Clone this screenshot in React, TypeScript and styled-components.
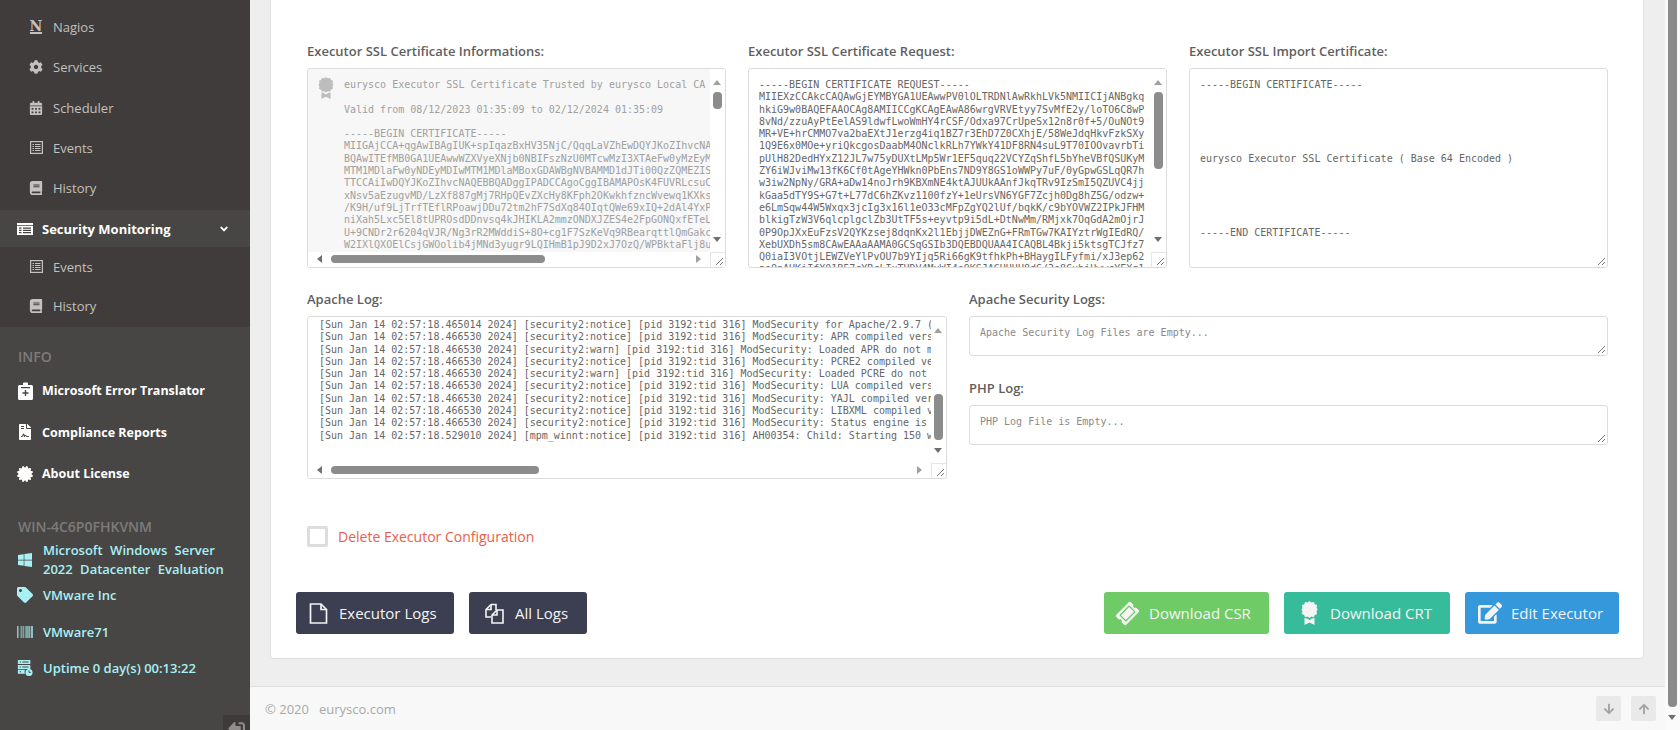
import React from "react";
import styled, { createGlobalStyle } from "styled-components";
import {
  FaAngleDown,
  FaArrowDown,
  FaArrowUp,
  FaBarcode,
  FaBook,
  FaCalendarAlt,
  FaCertificate,
  FaCog,
  FaEdit,
  FaFileContract,
  FaSignOutAlt,
  FaTag,
  FaTicketAlt,
  FaWindows,
} from "react-icons/fa";

const GlobalStyle = createGlobalStyle`
  html, body {
    margin: 0;
    height: 730px;
    overflow: hidden;
    font-family: "Open Sans", "Noto Sans", sans-serif;
    background: #eeeeee;
  }
  * { box-sizing: border-box; }
`;

const Page = styled.div`
  display: flex;
  width: 1680px;
  height: 730px;
  overflow: hidden;
`;

const Sidebar = styled.aside`
  position: relative;
  flex: 0 0 250px;
  background: #484644;
  display: flex;
  flex-direction: column;
`;

const SubMenu = styled.div<{ $height: number; $pad: number }>`
  background: #403c3b;
  height: ${(p) => p.$height}px;
  display: flex;
  flex-direction: column;
  justify-content: flex-end;
  padding-bottom: ${(p) => p.$pad}px;
`;

const SubItem = styled.div`
  height: 40.2px;
  display: flex;
  align-items: center;
  padding-left: 29px;
  gap: 10px;
  color: #c2c0bf;
  font-size: 13px;
`;

const SubIcon = styled.span`
  width: 14px;
  display: flex;
  justify-content: center;
  font-size: 14px;
  color: #c4c2c1;
`;

const NagiosMark = styled.span`
  font-family: "DejaVu Serif", "Liberation Serif", serif;
  font-weight: 700;
  font-size: 14px;
  line-height: 12px;
  border-bottom: 2px solid #c4c2c1;
`;

const ActiveItem = styled.div`
  height: 37px;
  display: flex;
  align-items: center;
  padding: 0 20px 0 17px;
  color: #fff;
  font-size: 13px;
  font-weight: 700;
  gap: 9px;
`;

const Caret = styled.span`
  margin-left: auto;
  display: flex;
  font-size: 12px;
`;

const SectionTitle = styled.div<{ $top: number }>`
  margin-top: ${(p) => p.$top}px;
  padding-left: 18px;
  color: #7d7b7a;
  font-size: 14px;
  font-weight: 600;
  line-height: 20px;
`;

const InfoList = styled.div`
  margin-top: 3px;
  display: flex;
  flex-direction: column;
`;

const InfoItem = styled.div<{ $height: number }>`
  height: ${(p) => p.$height}px;
  display: flex;
  align-items: center;
  padding-left: 17px;
  gap: 9px;
  color: #fff;
  font-size: 12.5px;
  font-weight: 700;
`;

const InfoIcon = styled.span`
  width: 16px;
  display: flex;
  justify-content: center;
  font-size: 16px;
`;

const HostList = styled.div`
  margin-top: 2px;
  color: #a9f0f5;
  font-size: 13px;
  font-weight: 600;
  display: flex;
  flex-direction: column;
`;

const HostItem = styled.div<{ $height: number; $top?: number }>`
  height: ${(p) => p.$height}px;
  margin-top: ${(p) => p.$top ?? 0}px;
  display: flex;
  align-items: center;
  padding-left: 17px;
  gap: 10px;
`;

const HostName = styled.div`
  width: 182px;
  line-height: 19px;
  word-spacing: 4px;
`;

const Collapse = styled.div`
  position: absolute;
  right: 0;
  bottom: 0;
  width: 27px;
  height: 15px;
  background: #3d3a39;
  overflow: hidden;
  display: flex;
  justify-content: center;
  padding-top: 5px;
  color: #8f8d8c;
  font-size: 17px;
  svg { transform: scaleX(-1); flex: none; }
`;

const Main = styled.main`
  flex: 1;
  display: flex;
  flex-direction: column;
  min-width: 0;
`;

const Content = styled.div`
  flex: 1;
  padding: 0 21px 0 20px;
  background: #eeeeee;
`;

const Panel = styled.section`
  height: 659px;
  background: #fff;
  border: 1px solid #e0e0e0;
  border-top: 0;
  border-radius: 0 0 3px 3px;
  padding: 41px 36px 0 36px;
`;

const CertRow = styled.div`
  display: grid;
  grid-template-columns: repeat(3, 419px);
  column-gap: 22px;
`;

const Label = styled.label`
  display: block;
  color: #5f5f5f;
  font-size: 13px;
  font-weight: 600;
  line-height: 20px;
  margin-bottom: 7px;
`;

const TextBox = styled.div<{ $height: number; $readOnly?: boolean }>`
  position: relative;
  height: ${(p) => p.$height}px;
  border: 1px solid #dcdcdc;
  border-radius: 3px;
  background: ${(p) => (p.$readOnly ? "#f7f7f7" : "#fff")};
  overflow: hidden;
`;

const Mono = styled.pre<{ $left?: number; $top?: number; $tone?: string; $scroll?: boolean; $hscroll?: boolean }>`
  margin: 0;
  width: ${(p) => (p.$scroll ? "calc(100% - 15px)" : "100%")};
  height: ${(p) => (p.$hscroll ? "calc(100% - 15px)" : "100%")};
  padding: ${(p) => p.$top ?? 10}px 0 0 ${(p) => p.$left ?? 10}px;
  font-family: "DejaVu Sans Mono", "Liberation Mono", monospace;
  font-size: 10px;
  line-height: 12.3px;
  color: ${(p) => p.$tone ?? "#666"};
  overflow: hidden;
  white-space: pre;
`;

const CertIcon = styled.span`
  position: absolute;
  left: 10px;
  top: 8px;
  color: #bdbdbd;
  display: flex;
`;

const VTrack = styled.div`
  position: absolute;
  top: 0;
  right: 0;
  bottom: 15px;
  width: 15px;
  background: #fff;
`;

const HTrack = styled.div`
  position: absolute;
  left: 0;
  right: 15px;
  bottom: 0;
  height: 15px;
  background: #fff;
`;

const Thumb = styled.div`
  position: absolute;
  background: #8c8c8c;
  border-radius: 4px;
`;

const Arrow = styled.div<{ $dir: "up" | "down" | "left" | "right" }>`
  position: absolute;
  width: 0;
  height: 0;
  border-style: solid;
  border-color: transparent;
  ${(p) =>
    p.$dir === "up"
      ? "border-width: 0 4.5px 5px; border-bottom-color: #a0a0a0;"
      : p.$dir === "down"
      ? "border-width: 5px 4.5px 0; border-top-color: #707070;"
      : p.$dir === "left"
      ? "border-width: 4.5px 5px 4.5px 0; border-right-color: #707070;"
      : "border-width: 4.5px 0 4.5px 5px; border-left-color: #a0a0a0;"}
`;

const Corner = styled.div<{ $boxed?: boolean }>`
  position: absolute;
  right: 0;
  bottom: 0;
  width: 15px;
  height: 15px;
  ${(p) => (p.$boxed ? "background: #fff; border-left: 1px solid #e6e6e6; border-top: 1px solid #e6e6e6;" : "")}
  svg { position: absolute; right: 1px; bottom: 1px; display: block; }
`;

const LogRow = styled.div`
  display: grid;
  grid-template-columns: 640px 639px;
  column-gap: 22px;
  margin-top: 21px;
`;

const LogColumn = styled.div`
  display: flex;
  flex-direction: column;
`;

const LogLabel = styled(Label)<{ $top?: number }>`
  margin-top: ${(p) => p.$top ?? 0}px;
`;

const DeleteRow = styled.div`
  display: flex;
  align-items: center;
  gap: 10px;
  margin-top: 47px;
  color: #e85e4c;
  font-size: 14px;
`;

const CheckBox = styled.span`
  width: 21px;
  height: 21px;
  border: 3px solid #dddddd;
  border-radius: 2px;
`;

const ButtonRow = styled.div`
  display: flex;
  align-items: center;
  margin: 45px -12px 0 -11px;
  gap: 15px;
`;

const Button = styled.button<{ $bg: string; $width: number; $pad: number; $gap: number; $icon?: number }>`
  display: flex;
  align-items: center;
  gap: ${(p) => p.$gap}px;
  width: ${(p) => p.$width}px;
  height: 42px;
  padding: 0 0 0 ${(p) => p.$pad}px;
  background: ${(p) => p.$bg};
  color: #f4f4f4;
  border: 0;
  border-radius: 3px;
  font-family: inherit;
  font-size: 15px;
  svg { flex: none; font-size: ${(p) => p.$icon ?? 21}px; }
`;

const Spacer = styled.div`
  flex: 1;
`;

const Footer = styled.footer`
  height: 44px;
  background: #f8f8f8;
  border-top: 1px solid #dfdfdf;
  display: flex;
  align-items: center;
  padding: 0 9px 0 15px;
  color: #a9a9a9;
  font-size: 13px;
`;

const FooterLink = styled.span`
  margin-left: 10px;
`;

const FooterButton = styled.span`
  width: 25px;
  height: 25px;
  margin-left: 10px;
  background: #e9e9e9;
  border-radius: 2px;
  color: #a3a3a3;
  font-size: 12px;
  display: flex;
  align-items: center;
  justify-content: center;
`;

const PageBar = styled.div`
  position: relative;
  flex: 0 0 15px;
  background: #fafafa;
`;

const PageThumb = styled.div`
  height: 707px;
  width: 9px;
  margin-left: 3px;
  background: #8a8a8a;
  border-radius: 0 0 4px 4px;
`;

const certInfo = `eurysco Executor SSL Certificate Trusted by eurysco Local CA

Valid from 08/12/2023 01:35:09 to 02/12/2024 01:35:09

-----BEGIN CERTIFICATE-----
MIIGAjCCA+qgAwIBAgIUK+spIqazBxHV35NjC/QqqLaVZhEwDQYJKoZIhvcNA
BQAwITEfMB0GA1UEAwwWZXVyeXNjb0NBIFszNzU0MTcwMzI3XTAeFw0yMzEyM
MTM1MDlaFw0yNDEyMDIwMTM1MDlaMBoxGDAWBgNVBAMMD1dJTi00QzZQMEZIS
TTCCAiIwDQYJKoZIhvcNAQEBBQADggIPADCCAgoCggIBAMAPOsK4FUVRLcsuC
xNsv5aEzugvMD/LzXf887gMj7RHpQEvZXcHy8KFph2OKwkhfzncWvewq1KXks
/K9H/uf9LjTrfTEflRPoawjDDu72tm2hF7SdXq84OIqtQWe69xIQ+2dAl4YxP
niXah5Lxc5El8tUPROsdDDnvsq4kJHIKLA2mmzONDXJZES4e2FpGONQxfETeL
U+9CNDr2r6204qVJR/Ng3rR2MWddiS+8O+cg1F7SzKeVq9RBearqttlQmGakc
W2IXlQXOElCsjGWOolib4jMNd3yugr9LQIHmB1pJ9D2xJ7OzQ/WPBktaFlj8u`;

const certRequest = `-----BEGIN CERTIFICATE REQUEST-----
MIIEXzCCAkcCAQAwGjEYMBYGA1UEAwwPV0lOLTRDNlAwRkhLVk5NMIICIjANBgkq
hkiG9w0BAQEFAAOCAg8AMIICCgKCAgEAwA86wrgVRVEtyy7SvMfE2y/loTO6C8wP
8vNd/zzuAyPtEelAS9ldwfLwoWmHY4rCSF/Odxa97CrUpeSx12n8r0f+5/OuNOt9
MR+VE+hrCMMO7va2baEXtJ1erzg4iq1BZ7r3EhD7Z0CXhjE/58WeJdqHkvFzkSXy
1Q9E6x0MOe+yriQkcgosDaabM4ONclkRLh7YWkY41DF8RN4suL9T70IOOvavrbTi
pUlH82DedHYxZ12JL7w75yDUXtLMp5Wr1EF5quq22VCYZqShfL5bYheVBfQSUKyM
ZY6iWJviMw13fK6Cf0tAgeYHWkn0PbEns7ND9Y8GS1oWWPy7uF/0yGpwGSLqQR7h
w3iw2NpNy/GRA+aDw14noJrh9KBXmNE4ktAJUUkAAnfJkqTRv9IzSmI5QZUVC4jj
kGaa5dTY9S+G7t+L77dC6hZKvz1100fzY+1eUrsVN6YGF7Zcjh0Dg8hZ5G/odzw+
e6LmSqw44W5Wxqx3jcIg3x16l1eO33cMFpZgYQ2lUf/bqkK/c9bYOVWZ2IPkJFHM
blkigTzW3V6qlcplgclZb3UtTF5s+eyvtp9i5dL+DtNwMm/RMjxk7OqGdA2mOjrJ
0P9OpJXxEuFzsV2QYKzsej8dqnKx2l1EbjjDWEZnG+FRmTGw7KAIYztrWgIEdRQ/
XebUXDh5sm8CAwEAAaAAMA0GCSqGSIb3DQEBDQUAA4ICAQBL4Bkji5ktsgTCJfz7
Q0iaI3VOtjLEWZVeYlPvOU7b9YIjq5Ri66gK9tfhkPh+BHaygILFyfmi/xJ3ep62
aoQaAHKiIfX01B57cYRcLIuTUDV4MuWI4o9KSJAGHUUH8dS/3e8CubjUwwcYEXq1`;

const certImport = `-----BEGIN CERTIFICATE-----





eurysco Executor SSL Certificate ( Base 64 Encoded )





-----END CERTIFICATE-----`;

const apacheLog = `[Sun Jan 14 02:57:18.465014 2024] [security2:notice] [pid 3192:tid 316] ModSecurity for Apache/2.9.7 (
[Sun Jan 14 02:57:18.466530 2024] [security2:notice] [pid 3192:tid 316] ModSecurity: APR compiled vers
[Sun Jan 14 02:57:18.466530 2024] [security2:warn] [pid 3192:tid 316] ModSecurity: Loaded APR do not m
[Sun Jan 14 02:57:18.466530 2024] [security2:notice] [pid 3192:tid 316] ModSecurity: PCRE2 compiled ve
[Sun Jan 14 02:57:18.466530 2024] [security2:warn] [pid 3192:tid 316] ModSecurity: Loaded PCRE do not 
[Sun Jan 14 02:57:18.466530 2024] [security2:notice] [pid 3192:tid 316] ModSecurity: LUA compiled vers
[Sun Jan 14 02:57:18.466530 2024] [security2:notice] [pid 3192:tid 316] ModSecurity: YAJL compiled ver
[Sun Jan 14 02:57:18.466530 2024] [security2:notice] [pid 3192:tid 316] ModSecurity: LIBXML compiled v
[Sun Jan 14 02:57:18.466530 2024] [security2:notice] [pid 3192:tid 316] ModSecurity: Status engine is 
[Sun Jan 14 02:57:18.529010 2024] [mpm_winnt:notice] [pid 3192:tid 316] AH00354: Child: Starting 150 w`;

const Grip = () => (
  <svg width="10" height="10" viewBox="0 0 10 10">
    <path d="M9 2 2 9M9 6 6 9" stroke="#777" strokeWidth="1" fill="none" />
  </svg>
);

const ListPageIcon = () => (
  <svg width="13" height="13" viewBox="0 0 13 13" fill="none" stroke="currentColor">
    <rect x="0.6" y="0.6" width="11.8" height="11.8" strokeWidth="1.2" />
    <path d="M2.500 3.500h1.500M5 3.500h5.500M2.500 5.500h1.500M5 5.500h5.500M2.500 7.500h1.500M5 7.500h5.500M2.500 9.500h1.500M5 9.500h5.500" strokeWidth="1" />
  </svg>
);

const WindowListIcon = () => (
  <svg width="16" height="12" viewBox="0 0 16 12">
    <path fill="#fff" d="M0 0h16v12H0z" />
    <path fill="#484644" d="M6 4.500h8v1.300H6zM6 6.800h8v1.300H6zM6 9h8v1.300H6zM2 4.500h2.500v1.300H2zM2 6.800h2.500v1.300H2zM2 9h2.500v1.300H2zM0 2h16v.8H0z" />
  </svg>
);

const ClipboardPlusIcon = () => (
  <svg width="15" height="18" viewBox="0 0 15 18">
    <path fill="#fff" d="M1.500 3H5V1.500A1 1 0 0 1 6 .5h3a1 1 0 0 1 1 1V3h3.500A1.500 1.500 0 0 1 15 4.500v12a1.500 1.500 0 0 1-1.500 1.500h-12A1.500 1.500 0 0 1 0 16.500v-12A1.500 1.500 0 0 1 1.500 3z" />
    <path fill="#484644" d="M3 5h9v1.200H3zM6.800 8H8.200v2.300h2.300v1.400H8.200V14H6.800v-2.300H4.500v-1.400h2.300z" />
  </svg>
);

const ServerClockIcon = () => (
  <svg width="18" height="18" viewBox="0 0 18 18">
    <path fill="#a9f0f5" d="M1 0h14v4.500H1zM1 5.500h14V10H1zM1 11h8a5 5 0 0 0 0 4.500H1z" />
    <path fill="#484644" d="M3 1.700h1.500v1.200H3zM6 1.700h7v1.200H6zM3 7.200h1.500v1.200H3zM6 7.200h7v1.200H6zM3 12.700h1.500v1.200H3z" />
    <circle cx="13.500" cy="14" r="4" fill="#a9f0f5" />
    <path d="M13.500 11.700V14h2" stroke="#484644" strokeWidth="1" fill="none" />
  </svg>
);

const FileIcon = () => (
  <svg width="19" height="21" viewBox="0 0 19 21" fill="none" stroke="#f4f4f4" strokeWidth="1.700">
    <path d="M1.500 1h10.500l5.500 5.500V20h-16z" />
    <path d="M12 1v5.500h5.500" />
  </svg>
);

const CopyIcon = () => (
  <svg width="21" height="21" viewBox="0 0 21 21" fill="none" stroke="#f4f4f4" strokeWidth="1.600">
    <path d="M8 1.500h5v5.500M8 1.500 3 6.500V14h5" />
    <path d="M14 7 9 12v8h11V7z" />
    <path d="M9 12h5V7M3 6.500h5v-5" />
  </svg>
);

const AwardIcon = ({ width, height }: { width: number; height: number }) => (
  <svg width={width} height={height} viewBox="0 0 16 24">
    <path fill="currentColor" d="M8 0l2 1.500 2.400-.6 1 2.300 2.300 1-.6 2.400L16 8.500l-1 2 .6 2.400-2.300 1-1 2.300-2.400-.6L8 17l-2-1.400-2.400.6-1-2.300-2.300-1 .6-2.400L0 8.500l.9-1.900-.6-2.400 2.300-1 1-2.300L6 1.500z" />
    <path fill="currentColor" d="M3 17l2.500.5L8 19l2.500-1.500L13 17v7l-5-2.500L3 24z" />
  </svg>
);

function ScrollBox({
  thumbY,
  thumbH,
  hThumbX,
  hThumbW,
  downTop,
  children,
}: {
  thumbY: number;
  thumbH: number;
  hThumbX?: number;
  hThumbW?: number;
  downTop: number;
  children: React.ReactNode;
}) {
  return (
    <>
      {children}
      <VTrack>
        <Arrow $dir="up" style={{ top: 11, left: 3 }} />
        <Thumb style={{ top: thumbY, left: 3, width: 9, height: thumbH }} />
        <Arrow $dir="down" style={{ top: downTop, left: 3 }} />
      </VTrack>
      {hThumbX !== undefined && (
        <HTrack>
          <Arrow $dir="left" style={{ top: 3, left: 9 }} />
          <Thumb style={{ left: hThumbX, top: 3, height: 8, width: hThumbW }} />
          <Arrow $dir="right" style={{ top: 3, right: 9 }} />
        </HTrack>
      )}
      <Corner $boxed>
        <Grip />
      </Corner>
    </>
  );
}

function App() {
  return (
    <Page>
      <GlobalStyle />
      <Sidebar>
        <SubMenu $height={210} $pad={2}>
          <SubItem>
            <SubIcon><NagiosMark>N</NagiosMark></SubIcon>Nagios
          </SubItem>
          <SubItem>
            <SubIcon><FaCog /></SubIcon>Services
          </SubItem>
          <SubItem>
            <SubIcon><FaCalendarAlt /></SubIcon>Scheduler
          </SubItem>
          <SubItem>
            <SubIcon><ListPageIcon /></SubIcon>Events
          </SubItem>
          <SubItem>
            <SubIcon><FaBook /></SubIcon>History
          </SubItem>
        </SubMenu>
        <ActiveItem>
          <WindowListIcon />
          Security Monitoring
          <Caret><FaAngleDown /></Caret>
        </ActiveItem>
        <SubMenu $height={80} $pad={1}>
          <SubItem>
            <SubIcon><ListPageIcon /></SubIcon>Events
          </SubItem>
          <SubItem>
            <SubIcon><FaBook /></SubIcon>History
          </SubItem>
        </SubMenu>
        <SectionTitle $top={20}>INFO</SectionTitle>
        <InfoList>
          <InfoItem $height={41}>
            <InfoIcon><ClipboardPlusIcon /></InfoIcon>Microsoft Error Translator
          </InfoItem>
          <InfoItem $height={42}>
            <InfoIcon><FaFileContract /></InfoIcon>Compliance Reports
          </InfoItem>
          <InfoItem $height={41}>
            <InfoIcon><FaCertificate /></InfoIcon>About License
          </InfoItem>
        </InfoList>
        <SectionTitle $top={23}>WIN-4C6P0FHKVNM</SectionTitle>
        <HostList>
          <HostItem $height={41}>
            <InfoIcon><FaWindows /></InfoIcon>
            <HostName>Microsoft Windows Server 2022 Datacenter Evaluation</HostName>
          </HostItem>
          <HostItem $height={26} $top={2}>
            <InfoIcon><FaTag /></InfoIcon>VMware Inc
          </HostItem>
          <HostItem $height={26} $top={11}>
            <InfoIcon><FaBarcode /></InfoIcon>VMware71
          </HostItem>
          <HostItem $height={26} $top={10}>
            <InfoIcon><ServerClockIcon /></InfoIcon>Uptime 0 day(s) 00:13:22
          </HostItem>
        </HostList>
        <Collapse><FaSignOutAlt /></Collapse>
      </Sidebar>
      <Main>
        <Content>
          <Panel>
            <CertRow>
              <div>
                <Label>Executor SSL Certificate Informations:</Label>
                <TextBox $height={200} $readOnly>
                  <CertIcon><AwardIcon width={16} height={22} /></CertIcon>
                  <ScrollBox thumbY={23} thumbH={17} hThumbX={23} hThumbW={214} downTop={168}>
                    <Mono $left={36} $tone="#a0a0a0" $scroll $hscroll>{certInfo}</Mono>
                  </ScrollBox>
                </TextBox>
              </div>
              <div>
                <Label>Executor SSL Certificate Request:</Label>
                <TextBox $height={200}>
                  <ScrollBox thumbY={23} thumbH={77} downTop={168}>
                    <Mono $scroll>{certRequest}</Mono>
                  </ScrollBox>
                </TextBox>
              </div>
              <div>
                <Label>Executor SSL Import Certificate:</Label>
                <TextBox $height={200}>
                  <Mono>{certImport}</Mono>
                  <Corner><Grip /></Corner>
                </TextBox>
              </div>
            </CertRow>
            <LogRow>
              <LogColumn>
                <Label>Apache Log:</Label>
                <TextBox $height={163}>
                  <ScrollBox thumbY={77} thumbH={46} hThumbX={23} hThumbW={208} downTop={131}>
                    <Mono $left={11} $top={2} $scroll $hscroll>{apacheLog}</Mono>
                  </ScrollBox>
                </TextBox>
              </LogColumn>
              <LogColumn>
                <Label>Apache Security Logs:</Label>
                <TextBox $height={40}>
                  <Mono $tone="#8a8a8a">Apache Security Log Files are Empty...</Mono>
                  <Corner><Grip /></Corner>
                </TextBox>
                <LogLabel $top={22}>PHP Log:</LogLabel>
                <TextBox $height={40}>
                  <Mono $tone="#8a8a8a">PHP Log File is Empty...</Mono>
                  <Corner><Grip /></Corner>
                </TextBox>
              </LogColumn>
            </LogRow>
            <DeleteRow>
              <CheckBox />
              Delete Executor Configuration
            </DeleteRow>
            <ButtonRow>
              <Button $bg="#3b3f51" $width={158} $pad={13} $gap={11}><FileIcon />Executor Logs</Button>
              <Button $bg="#3b3f51" $width={118} $pad={14} $gap={11}><CopyIcon />All Logs</Button>
              <Spacer />
              <Button $bg="#6fcb65" $width={165} $pad={13} $gap={11}><FaTicketAlt style={{ transform: "rotate(-45deg)" }} />Download CSR</Button>
              <Button $bg="#37bc9b" $width={166} $pad={17} $gap={12}><AwardIcon width={17} height={24} />Download CRT</Button>
              <Button $bg="#3498db" $width={154} $pad={13} $gap={9} $icon={24}><FaEdit />Edit Executor</Button>
            </ButtonRow>
          </Panel>
        </Content>
        <Footer>
          © 2020<FooterLink>eurysco.com</FooterLink>
          <Spacer />
          <FooterButton><FaArrowDown /></FooterButton>
          <FooterButton><FaArrowUp /></FooterButton>
        </Footer>
      </Main>
      <PageBar>
        <PageThumb />
        <Arrow $dir="down" style={{ left: 3, top: 715 }} />
      </PageBar>
    </Page>
  );
}

export default App;
